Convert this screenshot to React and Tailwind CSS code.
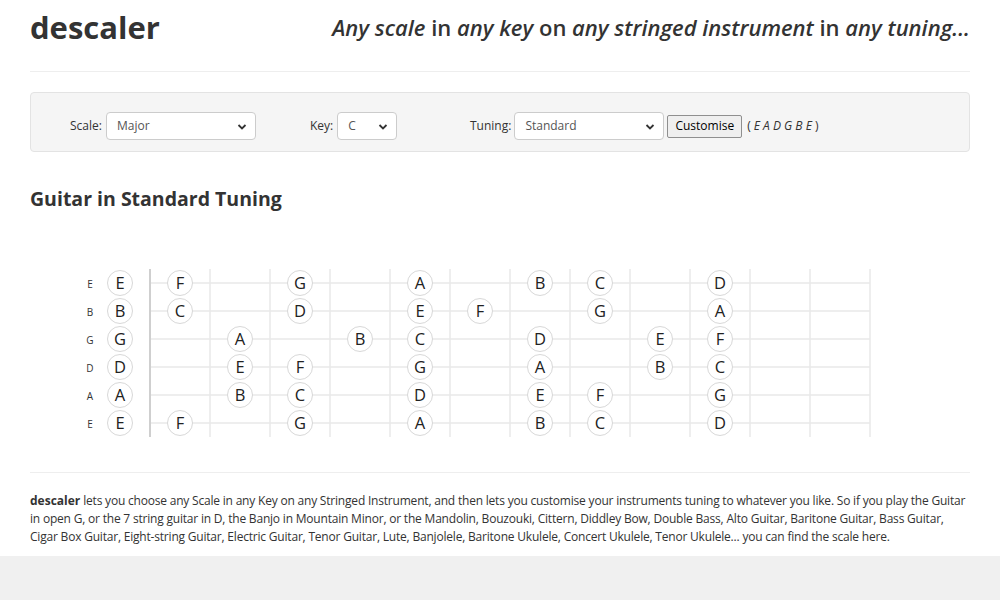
import React from "react";

const FONT = { fontFamily: '"Open Sans", "DejaVu Sans", sans-serif' };

const strings = [
  { label: "E", notes: { 0: "E", 1: "F", 3: "G", 5: "A", 7: "B", 8: "C", 10: "D" } },
  { label: "B", notes: { 0: "B", 1: "C", 3: "D", 5: "E", 6: "F", 8: "G", 10: "A" } },
  { label: "G", notes: { 0: "G", 2: "A", 4: "B", 5: "C", 7: "D", 9: "E", 10: "F" } },
  { label: "D", notes: { 0: "D", 2: "E", 3: "F", 5: "G", 7: "A", 9: "B", 10: "C" } },
  { label: "A", notes: { 0: "A", 2: "B", 3: "C", 5: "D", 7: "E", 8: "F", 10: "G" } },
  { label: "E", notes: { 0: "E", 1: "F", 3: "G", 5: "A", 7: "B", 8: "C", 10: "D" } },
];

function Select({ value, w }) {
  return (
    <div className={`relative ${w} h-[28px] bg-white border border-[#cccccc] rounded-[4px] flex items-center pl-[10px] text-[12px] text-[#555]`}>
      <span>{value}</span>
      <svg className="absolute right-[8px] top-[10px]" width="10" height="8" viewBox="0 0 10 8">
        <path d="M1.5 2 L5 5.5 L8.5 2" fill="none" stroke="#333" strokeWidth="1.8" />
      </svg>
    </div>
  );
}

function Fretboard() {
  const rowY = (i) => 22 + i * 28;
  const fretX = (f) => (f === 0 ? 90 : 120 + (f - 1) * 60 + 30);
  const lines = [];
  for (let k = 0; k <= 12; k++) lines.push(120 + k * 60);
  return (
    <svg width="940" height="180" viewBox="0 0 940 180" style={FONT}>
      {strings.map((s, i) => (
        <line key={"h" + i} x1="120" x2="840" y1={rowY(i)} y2={rowY(i)} stroke="#e8e8e8" strokeWidth="1.5" />
      ))}
      {lines.map((x, k) => (
        <line key={"v" + k} x1={x} x2={x} y1="8" y2="176" stroke={k === 0 ? "#cfcfcf" : "#e8e8e8"} strokeWidth={k === 0 ? 2 : 1.5} />
      ))}
      {strings.map((s, i) => (
        <g key={"s" + i}>
          <text x="60" y={rowY(i) + 5} fontSize="10" textAnchor="middle" fill="#333">{s.label}</text>
          {Object.entries(s.notes).map(([f, n]) => (
            <g key={f}>
              <circle cx={fretX(+f)} cy={rowY(i)} r="12.5" fill="#fff" stroke="#d8d8d8" strokeWidth="1" />
              <text x={fretX(+f)} y={rowY(i) + 6} fontSize="16.5" textAnchor="middle" fill="#222">{n}</text>
            </g>
          ))}
        </g>
      ))}
    </svg>
  );
}

export default function App() {
  return (
    <div className="w-[1000px] min-h-[600px] bg-white text-[#333] flex flex-col" style={FONT}>
      <div className="px-[30px]">
        <div className="h-[72px] border-b border-[#eeeeee] flex justify-between items-start pt-[6px]">
          <div className="text-[31px] font-bold leading-[42px] text-[#333]">descaler</div>
          <div className="text-[22px] leading-[42px] text-[#333] font-semibold">
            <i>Any scale</i> in <i>any key</i> on <i>any stringed instrument</i> in <i>any tuning...</i>
          </div>
        </div>
        <div className="mt-[20px] h-[60px] bg-[#f5f5f5] border border-[#e3e3e3] rounded-[4px] flex items-center pt-[8px] text-[12px]">
          <div className="flex items-center ml-[39px] w-[240px]">
            <span className="mr-[4px]">Scale:</span>
            <Select value="Major" w="w-[150px]" />
          </div>
          <div className="flex items-center w-[160px]">
            <span className="mr-[4px]">Key:</span>
            <Select value="C" w="w-[60px]" />
          </div>
          <div className="flex items-center">
            <span className="mr-[3px]">Tuning:</span>
            <Select value="Standard" w="w-[150px]" />
            <button className="ml-[3px] h-[23px] px-[7px] bg-[#efefef] border border-[#8f8f8f] rounded-[2px] text-[12px] text-black">Customise</button>
            <span className="ml-[5px] text-[12px]">( <i>E A D G B E</i> )</span>
          </div>
        </div>
        <h2 className="mt-[33px] text-[19.5px] font-bold leading-[28px] text-[#333]">Guitar in Standard Tuning</h2>
        <div className="mt-[48px]">
          <Fretboard />
        </div>
        <div className="mt-[31px] border-t border-[#eeeeee] pt-[19px] pb-[10px] text-[12px] leading-[18px] tracking-[-0.2px]">
          <b className="tracking-normal">descaler</b> lets you choose any Scale in any Key on any Stringed Instrument, and then lets you customise your instruments tuning to whatever you like. So if you play the Guitar in open G, or the 7 string guitar in D, the Banjo in Mountain Minor, or the Mandolin, Bouzouki, Cittern, Diddley Bow, Double Bass, Alto Guitar, Baritone Guitar, Bass Guitar, Cigar Box Guitar, Eight-string Guitar, Electric Guitar, Tenor Guitar, Lute, Banjolele, Baritone Ukulele, Concert Ukulele, Tenor Ukulele... you can find the scale here.
        </div>
      </div>
      <div className="flex-1 bg-[#f0f0f0]"></div>
    </div>
  );
}
